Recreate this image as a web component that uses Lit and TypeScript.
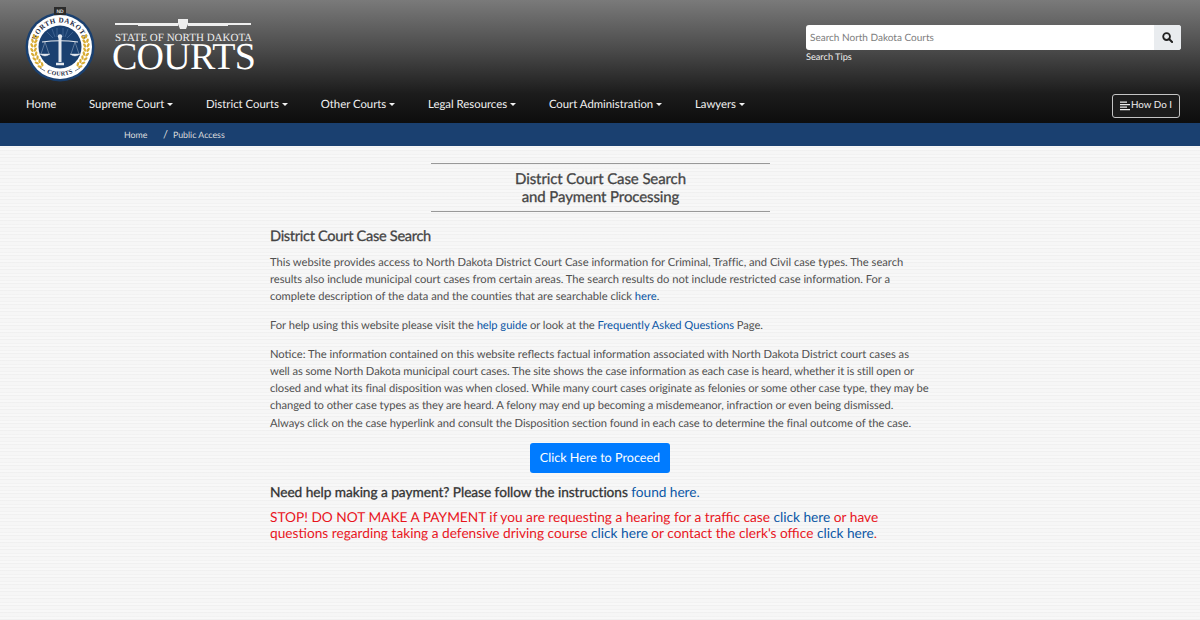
import { LitElement, html, css, svg } from "lit";
import { customElement } from "lit/decorators.js";

const wheat = (side: number) => {
  const items = [];
  for (let i = 0; i < 8; i++) {
    const deg = -44 + i * 9.5;
    const a = deg * (Math.PI / 180);
    for (const off of [-1.7, 1.7]) {
      const r = 26.5 + off;
      const ex = 35 + side * r * Math.cos(a);
      const ey = 43 - r * Math.sin(a);
      const tilt = (off > 0 ? 30 : -30) - deg;
      items.push(svg`<ellipse cx=${ex} cy=${ey} rx="1.2" ry="2.3" fill="#d8ac35" transform="rotate(${side * tilt} ${ex} ${ey})"/>`);
    }
  }
  return items;
};

const logo = svg`
<svg class="seal" viewBox="0 0 70 78" width="70" height="78" aria-hidden="true">
  <circle cx="35" cy="43" r="34.5" fill="#1a4070"/>
  <circle cx="35" cy="43" r="32" fill="#fff"/>
  <rect x="29" y="3" width="12" height="8" fill="#2b2b2b"/>
  <text x="35" y="9.2" font-size="5" font-weight="700" fill="#ddd" text-anchor="middle" font-family="Liberation Sans, sans-serif">ND</text>
  <circle cx="35" cy="43" r="21.5" fill="#1a4070"/>
  <defs>
    <path id="topArc" d="M11 49A24.7 24.7 0 1 1 59 49"/>
    <path id="botArc" d="M13 61.6A29 29 0 0 0 57 61.6"/>
  </defs>
  <text font-size="7" font-weight="700" fill="#1d2a44" font-family="Liberation Serif, serif" letter-spacing=".5"><textPath href="#topArc" startOffset="50%" text-anchor="middle">NORTH DAKOTA</textPath></text>
  <text font-size="6" font-weight="700" fill="#1d2a44" font-family="Liberation Serif, serif" letter-spacing=".4"><textPath href="#botArc" startOffset="50%" text-anchor="middle">COURTS</textPath></text>
  <path d="M15 64 20 67M55 64 50 67" stroke="#1d2a44" stroke-width=".6"/>
  ${wheat(-1)}${wheat(1)}
  <g stroke="#e4e8ee" fill="none">
    <path d="M38 24V33M43 25 40 33M48 28 42 34M32 24V33M27 25 30 33M22 28 28 34" stroke="#5f7fa8" stroke-width=".5"/>
    <path d="M17 38 Q35 35.5 53 38" stroke-width="1.1"/>
    <path d="M35 34V58" stroke-width="3"/>
    <path d="M20 38 16 50M20 38 24 50M50 38 46 50M50 38 54 50" stroke-width=".35"/>
    <path d="M15 50 Q20 54 25 50ZM45 50 Q50 54 55 50Z" fill="#e4e8ee" stroke-width=".4"/>
    <path d="M31 60H39" stroke-width="2.5"/>
  </g>
  <circle cx="35" cy="32.5" r="2.2" fill="#e4e8ee"/>
</svg>`;

@customElement("app-root")
export class AppRoot extends LitElement {
  static styles = css`
    :host { display: block; height: 620px; overflow: hidden; font-family: Lato, sans-serif; color: #505050; font-size: 11.2px; line-height: 17.25px; text-rendering: geometricPrecision;
      background-color: #f4f4f4;
      background-image:
        repeating-linear-gradient(0deg, rgba(0,0,0,.016) 0 1px, rgba(255,255,255,.4) 1px 3px, rgba(0,0,0,.008) 3px 4px, rgba(255,255,255,.2) 4px 7px); }
    a { color: #0a56a5; text-decoration: none; }
    .top { height: 123px; background: linear-gradient(#7a7a7a 0, #4b4b4b 40%, #1c1c1c 76%, #0d0d0d 100%); display: flex; flex-direction: column; }
    .brand-row { height: 87px; display: flex; justify-content: space-between; padding: 4px 19px 0 25px; box-sizing: border-box; }
    .brand { display: flex; gap: 18px; }
    .seal { display: block; }
    .word { padding-top: 15px; width: 141px; color: #fff; font-family: "Liberation Serif", serif; }
    .bar { display: flex; align-items: center; height: 10px; margin: 0 3px 0 2px; }
    .bar i { flex: 1; height: 1.6px; background: #eee; }
    .bar i.mid { height: 3px; flex: 0 0 40px; }
    .bar svg { display: block; }
    .state { font-size: 11px; line-height: 11px; white-space: nowrap; margin: 4px 0 0 2px; color: #eee; }
    .courts { font-size: 38px; line-height: 28px; white-space: nowrap; letter-spacing: -.75px; margin: -1px 0 0 -1px; }
    .search { width: 375px; padding-top: 21px; }
    .field { display: flex; height: 25px; background: #fff; border-radius: 3px; overflow: hidden; }
    .field span { flex: 1; color: #7d7d7d; font-size: 10px; line-height: 26px; padding-left: 4px; }
    .field b { width: 27px; background: #e9ecef; display: flex; align-items: center; justify-content: center; }
    .tips { color: #eee; font-size: 9.2px; line-height: 14px; }
    nav { display: flex; align-items: center; height: 36px; padding: 1px 20px 0 26px; box-sizing: border-box; color: #f2f2f2; font-size: 11.35px; }
    nav span { margin: -2px 32.8px 0 0; display: flex; align-items: center; white-space: nowrap; }
    nav span.d::after { content: ""; margin-left: 3px; border-top: 3.5px solid #f2f2f2; border-left: 3.5px solid transparent; border-right: 3.5px solid transparent; }
    .how { margin-left: auto; box-sizing: border-box; width: 68px; height: 24px; border: 1px solid #c4c4c4; border-radius: 3px; background: #1c1c1c; color: #eee; font-size: 9.8px; display: flex; align-items: center; gap: 1px; justify-content: center; }
    .crumbs { height: 23px; background: #1a4070; color: #ddd; font-size: 8.8px; display: flex; align-items: center; padding-left: 124px; }
    .crumbs em { font-style: normal; font-size: 11px; margin: 0 5px 0 15.5px; }
    main { width: 660px; margin-left: 270px; }
    .title { width: 339px; box-sizing: border-box; margin: 17px 0 0 161px; border-top: 1px solid #999; border-bottom: 1px solid #999; padding: 7px 0 4px; text-align: center; color: #444; font-size: 15px; letter-spacing: -.1px; line-height: 17.8px; -webkit-text-stroke: .3px #444; }
    h2 { font-size: 14.6px; letter-spacing: -.3px; line-height: 20px; font-weight: 400; -webkit-text-stroke: .3px #444; color: #444; margin: 15px 0 7px; }
    p { margin: 0 0 11.5px; white-space: nowrap; }
    .snug { letter-spacing: -.02px; }
    .tight { letter-spacing: -.045px; }
    .tighter { letter-spacing: -.065px; }
    .cta { display: flex; justify-content: center; margin: 3.5px 0 9px; }
    .cta span { background: #007bff; color: #fff; font-size: 12.6px; height: 30px; line-height: 30px; width: 140px; text-align: center; border-radius: 3px; }
    .help { font-size: 13.7px; line-height: 20px; color: #333; letter-spacing: -.04px; -webkit-text-stroke: .3px #333; margin: 0 0 7px; white-space: nowrap; }
    .help a { -webkit-text-stroke: 0; }
    .stop { font-size: 13.7px; line-height: 16px; color: #e8141c; white-space: nowrap; }
  `;

  render() {
    return html`
      <header class="top">
        <div class="brand-row">
          <div class="brand">
            ${logo}
            <div class="word">
              <div class="bar"><i></i><i class="mid"></i><svg width="10" height="10" viewBox="0 0 10 10"><path d="M0 0H10V5L8 10H2L0 5Z" fill="#eee"/></svg><i class="mid"></i><i></i></div>
              <div class="state">STATE OF NORTH DAKOTA</div>
              <div class="courts">COURTS</div>
            </div>
          </div>
          <div class="search">
            <div class="field"><span>Search North Dakota Courts</span><b>
              <svg width="11" height="11" viewBox="0 0 12 12"><circle cx="5" cy="5" r="3.7" fill="none" stroke="#222" stroke-width="2"/><path d="M8 8 11 11" stroke="#222" stroke-width="2.2" stroke-linecap="round"/></svg></b></div>
            <div class="tips">Search Tips</div>
          </div>
        </div>
        <nav>
          <span>Home</span><span class="d">Supreme Court</span><span class="d">District Courts</span><span class="d">Other Courts</span><span class="d">Legal Resources</span><span class="d">Court Administration</span><span class="d">Lawyers</span>
          <div class="how"><svg width="10" height="10" viewBox="0 0 10 10"><path d="M0 1.2H7M0 3.7H10M0 6.2H7M0 8.7H10" stroke="#eee" stroke-width="1.3"/></svg>How Do I</div>
        </nav>
      </header>
      <div class="crumbs">Home<em>/</em>Public Access</div>
      <main>
        <div class="title">District Court Case Search<br />and Payment Processing</div>
        <h2>District Court Case Search</h2>
        <p class="snug">This website provides access to North Dakota District Court Case information for Criminal, Traffic, and Civil case types. The search<br />results also include municipal court cases from certain areas. The search results do not include restricted case information. For a<br />complete description of the data and the counties that are searchable click <a>here</a>.</p>
        <p class="tight">For help using this website please visit the <a>help guide</a> or look at the <a>Frequently Asked Questions</a> Page.</p>
        <p>Notice: The information contained on this website reflects factual information associated with North Dakota District court cases as<br /><span class="tighter">well as some North Dakota municipal court cases. The site shows the case information as each case is heard, whether it is still open or<br />closed and what its final disposition was when closed. While many court cases originate as felonies or some other case type, they may be<br />changed to other case types as they are heard. A felony may end up becoming a misdemeanor, infraction or even being dismissed.<br />Always click on the case hyperlink and consult the Disposition section found in each case to determine the final outcome of the case.</span></p>
        <div class="cta"><span>Click Here to Proceed</span></div>
        <div class="help">Need help making a payment? Please follow the instructions <a>found here.</a></div>
        <div class="stop">STOP! DO NOT MAKE A PAYMENT if you are requesting a hearing for a traffic case <a>click here</a> or have<br />questions regarding taking a defensive driving course <a>click here</a> or contact the clerk's office <a>click here</a>.</div>
      </main>
    `;
  }
}
